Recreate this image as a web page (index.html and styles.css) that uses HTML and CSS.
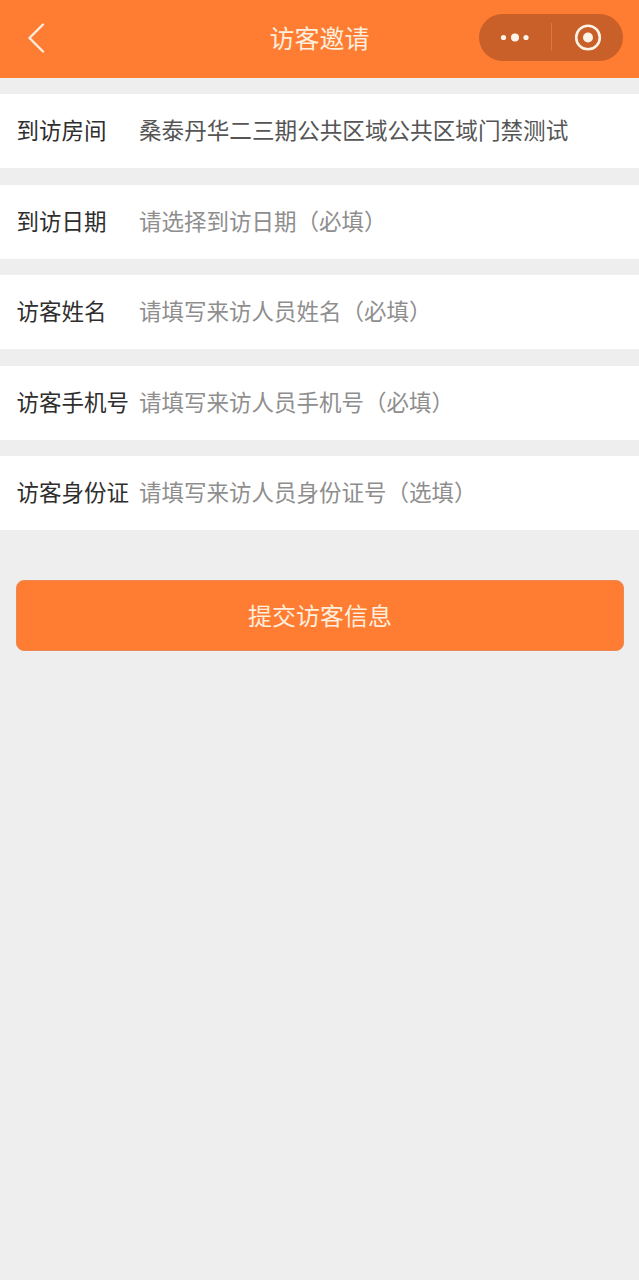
FILE: index.html
```html
<!DOCTYPE html>
<html lang="zh-CN">
<head>
    <meta charset="UTF-8">
    <meta name="viewport" content="width=device-width, initial-scale=1.0">
    <title>访客邀请</title>
    <link rel="stylesheet" href="styles.css">
</head>
<body>
    <!-- Header -->
    <div class="nav-bar">
        <svg class="back-icon" width="18" height="30" viewBox="0 0 18 30">
            <path d="M16 1.5 L2.5 15 L16 28.5" fill="none" stroke="#fdf0e2" stroke-width="2.3" stroke-linecap="round" stroke-linejoin="round"/>
        </svg>
        <div class="nav-title">访客邀请</div>
        <div class="capsule">
            <div class="capsule-btn">
                <svg width="32" height="12" viewBox="0 0 32 12">
                    <circle cx="4.5" cy="6.5" r="2.6" fill="#fdf3e6"/>
                    <circle cx="16" cy="6.5" r="4" fill="#fdf3e6"/>
                    <circle cx="27" cy="6.5" r="2.6" fill="#fdf3e6"/>
                </svg>
            </div>
            <div class="capsule-line"></div>
            <div class="capsule-btn">
                <svg width="30" height="28" viewBox="0 0 30 28">
                    <circle cx="16" cy="14.5" r="11.8" fill="none" stroke="#fdf3e6" stroke-width="2.6"/>
                    <circle cx="16" cy="14.5" r="5" fill="#fdf3e6"/>
                </svg>
            </div>
        </div>
    </div>

    <!-- Visitor Form -->
    <form class="visitor-form">
        <div class="form-row">
            <label>到访房间</label>
            <div class="row-value">桑泰丹华二三期公共区域公共区域门禁测试</div>
        </div>
        <div class="form-row">
            <label>到访日期</label>
            <div class="row-hint">请选择到访日期（必填）</div>
        </div>
        <div class="form-row">
            <label>访客姓名</label>
            <div class="row-hint">请填写来访人员姓名（必填）</div>
        </div>
        <div class="form-row">
            <label>访客手机号</label>
            <div class="row-hint">请填写来访人员手机号（必填）</div>
        </div>
        <div class="form-row">
            <label>访客身份证</label>
            <div class="row-hint">请填写来访人员身份证号（选填）</div>
        </div>
        <button type="button" class="submit-btn">提交访客信息</button>
    </form>
</body>
</html>
```

FILE: styles.css
```css
body {
    margin: 0;
    height: 1280px;
    overflow: hidden;
    background-color: #eeeeee;
    font-family: "Liberation Sans", "Noto Sans CJK SC", sans-serif;
}
.nav-bar {
    height: 78px;
    background-color: #ff7c33;
    display: flex;
    align-items: center;
    justify-content: space-between;
    padding: 0 16px 0 27px;
    position: relative;
    box-sizing: border-box;
}
.nav-title {
    position: absolute;
    left: 0;
    right: 0;
    padding-bottom: 4px;
    text-align: center;
    color: #fdeedd;
    font-size: 25px;
}
.back-icon {
    position: relative;
    margin-bottom: 2px;
}
.capsule {
    position: relative;
    width: 144px;
    height: 47px;
    margin-bottom: 4px;
    border-radius: 24px;
    background-color: #c9602a;
    display: flex;
    align-items: center;
}
.capsule-btn {
    flex: 1;
    display: flex;
    justify-content: center;
    align-items: center;
}
.capsule-line {
    width: 1px;
    height: 28px;
    background-color: #d9773f;
}
.visitor-form {
    display: flex;
    flex-direction: column;
    padding-top: 16px;
}
.form-row {
    height: 74px;
    margin-bottom: 16.5px;
    padding: 0 0 4px 16.5px;
    box-sizing: border-box;
    background-color: #fff;
    display: flex;
    align-items: center;
    font-size: 22.5px;
}
.form-row label {
    width: 122.5px;
    flex-shrink: 0;
    color: #2e2e2e;
    white-space: nowrap;
}
.row-value {
    color: #555;
    font-size: 22.6px;
    white-space: nowrap;
}
.row-hint {
    color: #8e8e8e;
    white-space: nowrap;
}
.submit-btn {
    margin: 33.5px 15px 0 16px;
    height: 71px;
    padding: 0 0 3px;
    border: 1px solid #ec8a55;
    border-radius: 8px;
    background-color: #ff7c33;
    color: #fdeedd;
    font-family: inherit;
    font-size: 24px;
}
```
